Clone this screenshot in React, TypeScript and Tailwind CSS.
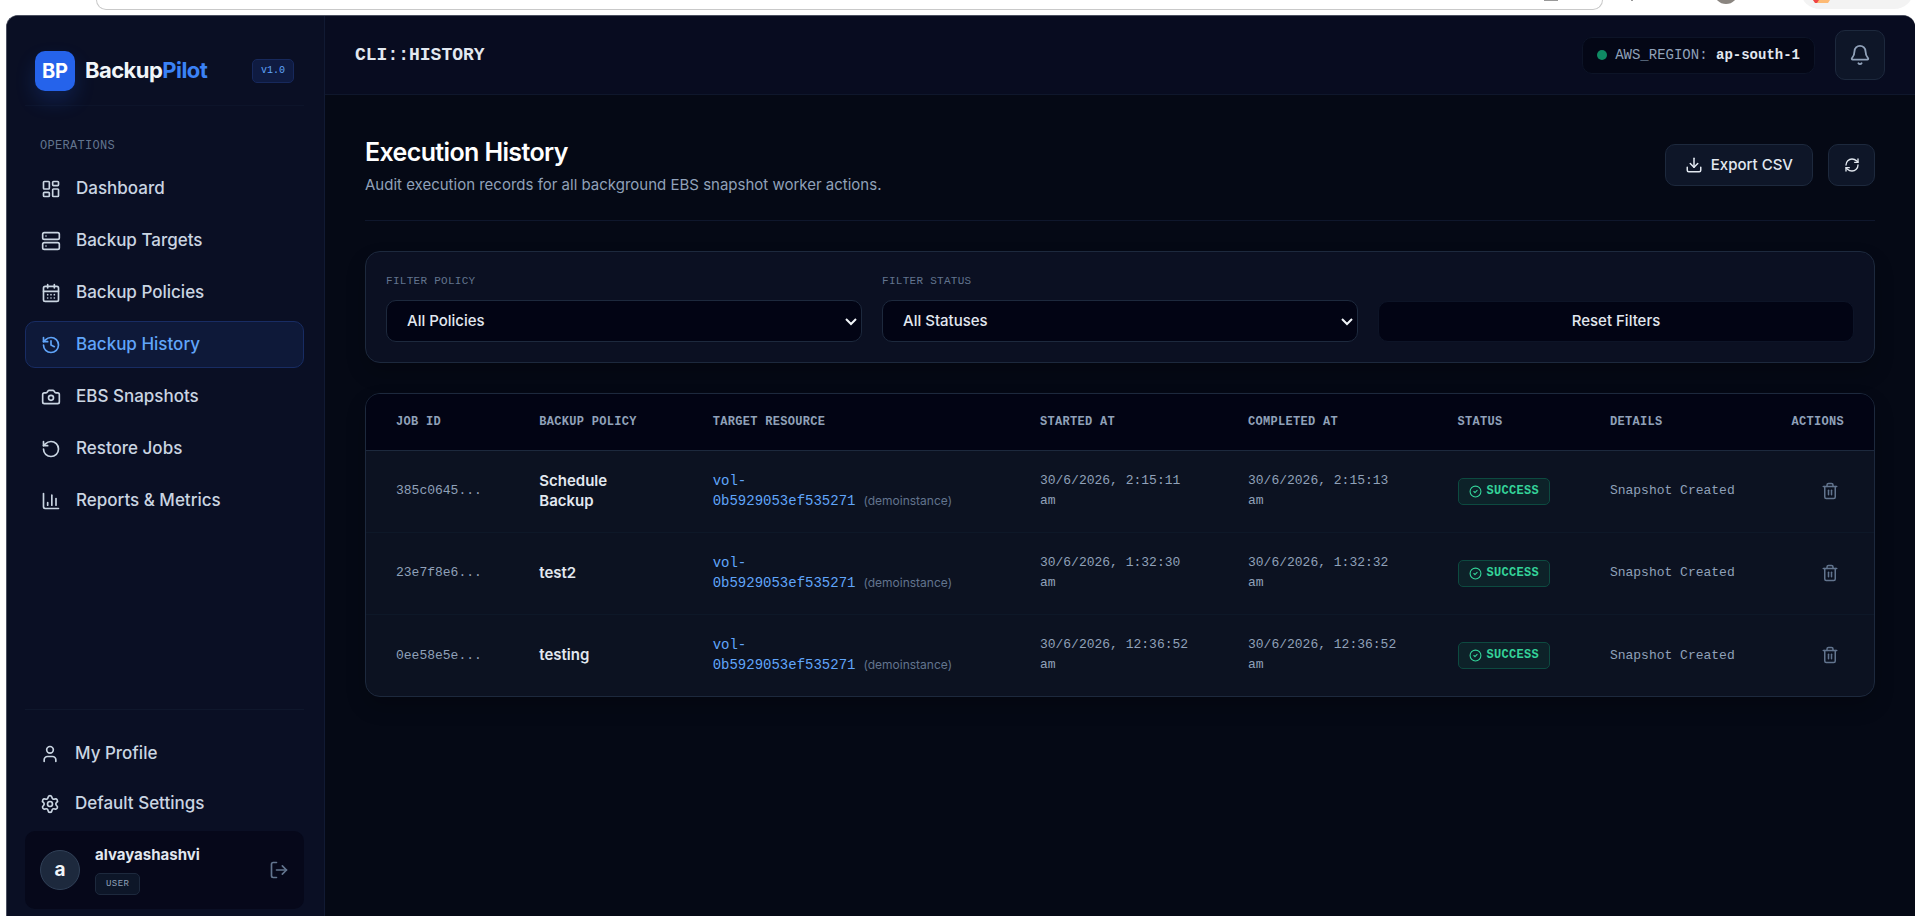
import { useState } from 'react'
import {
  Bell,
  CalendarDays,
  Camera,
  ChartColumn,
  CircleCheck,
  Download,
  History,
  LayoutDashboard,
  LogOut,
  RefreshCw,
  RotateCcw,
  Server,
  Settings,
  Trash2,
  User,
} from 'lucide-react'

const mono = "font-['Liberation_Mono','Courier_New',monospace]"

const navItems = [
  { label: 'Dashboard', icon: LayoutDashboard },
  { label: 'Backup Targets', icon: Server },
  { label: 'Backup Policies', icon: CalendarDays },
  { label: 'Backup History', icon: History, active: true },
  { label: 'EBS Snapshots', icon: Camera },
  { label: 'Restore Jobs', icon: RotateCcw },
  { label: 'Reports & Metrics', icon: ChartColumn },
]

const accountItems = [
  { label: 'My Profile', icon: User },
  { label: 'Default Settings', icon: Settings },
]

const jobs = [
  {
    id: '385c0645...',
    policy: 'Schedule Backup',
    volume: 'vol-0b5929053ef535271',
    instance: 'demoinstance',
    startedAt: '30/6/2026, 2:15:11 am',
    completedAt: '30/6/2026, 2:15:13 am',
    status: 'SUCCESS',
    details: 'Snapshot Created',
  },
  {
    id: '23e7f8e6...',
    policy: 'test2',
    volume: 'vol-0b5929053ef535271',
    instance: 'demoinstance',
    startedAt: '30/6/2026, 1:32:30 am',
    completedAt: '30/6/2026, 1:32:32 am',
    status: 'SUCCESS',
    details: 'Snapshot Created',
  },
  {
    id: '0ee58e5e...',
    policy: 'testing',
    volume: 'vol-0b5929053ef535271',
    instance: 'demoinstance',
    startedAt: '30/6/2026, 12:36:52 am',
    completedAt: '30/6/2026, 12:36:52 am',
    status: 'SUCCESS',
    details: 'Snapshot Created',
  },
]

const columns = [
  { label: 'Job ID', width: 'w-[9.5%]' },
  { label: 'Backup Policy', width: 'w-[11.5%]' },
  { label: 'Target Resource', width: 'w-[21.7%]' },
  { label: 'Started At', width: 'w-[13.8%]' },
  { label: 'Completed At', width: 'w-[13.9%]' },
  { label: 'Status', width: 'w-[10.1%]' },
  { label: 'Details', width: 'w-[12%]' },
  { label: 'Actions', width: 'w-[7.5%]' },
]

// Bottom edge of the browser toolbar above the page
function BrowserStrip() {
  return (
    <div className="flex h-[15px] shrink-0 items-start overflow-hidden bg-white pl-[96px]">
      <div className="flex h-[10px] flex-1 items-start justify-end rounded-b-[20px] border border-t-0 border-[#c9c9c9] pr-[44px]">
        <div className="h-px w-[14px] bg-[#999]" />
      </div>
      <svg width="312" height="10" viewBox="0 0 312 10">
        <rect x="28" y="0" width="2" height="1" fill="#999" />
        <circle cx="123" cy="-8" r="12" fill="#8a8580" />
        <rect x="197" y="-31" width="114" height="40" rx="20" fill="#f3f3f3" />
        <path d="M210 0h17l-2 3h-12z" fill="#fdba74" />
        <path d="M210 0h6l-2 3h-2z" fill="#ef4444" />
      </svg>
    </div>
  )
}

function Sidebar() {
  return (
    <aside className="flex w-[318px] shrink-0 flex-col border-r border-[#111a33] bg-[#0a0f24] pr-5 pb-[7px] pl-[18px]">
      <div className="flex h-[90px] shrink-0 items-center gap-[10px] border-b border-[#0d142a] px-[10px] pt-5">
        <div className="flex size-10 items-center justify-center rounded-[10px] bg-[#2563eb] text-[20px] font-bold text-white shadow-[0_10px_20px_rgba(37,99,235,0.2)]">
          BP
        </div>
        <div className="flex-1 text-[22px] font-bold tracking-tight text-slate-100">
          Backup<span className="text-[#3b82f6]">Pilot</span>
        </div>
        <span className={`${mono} rounded-[5px] border border-[#17295c] bg-[#0f1b41] px-2 py-1 text-[10px] leading-[14px] text-[#60a5fa]`}>
          v1.0
        </span>
      </div>

      <nav className="flex flex-1 flex-col gap-[5px] pt-[31px]">
        <div className={`${mono} mb-[5px] px-[15px] text-[12px] leading-[18px] tracking-wide text-slate-500 uppercase`}>Operations</div>
        {navItems.map(({ label, icon: Icon, active }) => (
          <a
            key={label}
            href="#"
            className={`flex h-[47px] items-center gap-[15px] rounded-[10px] border px-[15px] text-[17px] font-medium ${
              active ? 'border-[#182c63] bg-[#0e1939] text-[#60a5fa]' : 'border-transparent text-slate-300'
            }`}
          >
            <Icon size={20} strokeWidth={2} />
            {label}
          </a>
        ))}
      </nav>

      <div className="flex flex-col gap-[5px] border-t border-[#0f172c] pt-[21px]">
        {accountItems.map(({ label, icon: Icon }) => (
          <a key={label} href="#" className="flex h-[45px] items-center gap-[15px] px-[15px] text-[17px] font-medium text-slate-300">
            <Icon size={20} strokeWidth={2} />
            {label}
          </a>
        ))}
        <div className="flex h-[78px] items-center rounded-[10px] bg-[#06081a] px-[15px]">
          <div className="flex size-10 items-center justify-center rounded-full border border-slate-700 bg-slate-800 text-[19px] font-bold text-slate-100">
            a
          </div>
          <div className="ml-[15px] flex-1">
            <div className="text-[15px] leading-5 font-bold text-slate-200">alvayashashvi</div>
            <span className={`${mono} mt-2 inline-block rounded-[5px] border border-slate-800 bg-[#0d1628] px-[10px] text-[9px] leading-5 tracking-wider text-slate-400`}>
              USER
            </span>
          </div>
          <button type="button" aria-label="Log out" className="text-slate-500">
            <LogOut size={20} strokeWidth={2} />
          </button>
        </div>
      </div>
    </aside>
  )
}

function TopBar() {
  return (
    <header className="flex h-[79px] shrink-0 items-center justify-between border-b border-[#0f172c] bg-[#080c20] px-[30px]">
      <div className={`${mono} text-[18px] font-bold text-slate-200`}>CLI::HISTORY</div>
      <div className="flex items-center gap-5">
        <div className={`${mono} flex h-[37px] items-center rounded-[10px] border border-[#0d1427] bg-[#040716] px-[14px] text-[14px] text-slate-400`}>
          <span className="mr-2 size-[10px] rounded-full bg-[#0f8a63]" />
          AWS_REGION:&nbsp;<span className="font-bold text-slate-200">ap-south-1</span>
        </div>
        <button
          type="button"
          aria-label="Notifications"
          className="flex size-[50px] items-center justify-center rounded-[10px] border border-slate-800 bg-[#0e1628] text-slate-400"
        >
          <Bell size={22} strokeWidth={2} />
        </button>
      </div>
    </header>
  )
}

interface FilterSelectProps {
  id: string
  label: string
  options: string[]
}

function FilterSelect({ id, label, options }: FilterSelectProps) {
  const [value, setValue] = useState(options[0])

  return (
    <div>
      <label htmlFor={id} className={`${mono} mb-[10px] block text-[11px] leading-[18px] tracking-wide text-slate-500 uppercase`}>
        {label}
      </label>
      <div className="relative">
        <select
          id={id}
          value={value}
          onChange={e => setValue(e.target.value)}
          className="h-[42px] w-full appearance-none rounded-[10px] border border-slate-800 bg-[#020414] px-5 text-[15px] font-medium text-slate-200"
        >
          {options.map(option => (
            <option key={option}>{option}</option>
          ))}
        </select>
        <svg
          className="pointer-events-none absolute top-[18px] right-[5px] text-slate-100"
          width="12"
          height="8"
          viewBox="0 0 12 8"
          fill="none"
          stroke="currentColor"
          strokeWidth="2"
        >
          <path d="M1 1l5 5 5-5" />
        </svg>
      </div>
    </div>
  )
}

function HistoryTable() {
  return (
    <div className="mt-[30px] overflow-hidden rounded-[15px] border border-slate-800 bg-[#0c1221] shadow-[0_10px_20px_rgba(0,0,0,0.2)]">
      <table className="w-full table-fixed border-collapse text-left">
        <thead>
          <tr className="h-[56px] border-b border-slate-800 bg-[#020414]">
            {columns.map(({ label, width }) => (
              <th
                key={label}
                className={`${mono} ${width} px-[30px] text-[12px] font-bold tracking-wide text-slate-400 uppercase last:pl-0 last:text-right`}
              >
                {label}
              </th>
            ))}
          </tr>
        </thead>
        <tbody>
          {jobs.map(job => (
            <tr key={job.id} className="h-[82px] border-b border-[#0e1828] last:border-b-0">
              <td className={`${mono} pl-[30px] text-[13px] text-slate-400`}>{job.id}</td>
              <td className="px-[30px] text-[15px] leading-5 font-semibold text-slate-200">{job.policy}</td>
              <td className={`${mono} px-[30px] text-[14px] leading-5 text-[#60a5fa]`}>
                {job.volume}<span className="ml-2 font-['Inter','Liberation_Sans',sans-serif] text-[12px] leading-none text-slate-500">({job.instance})</span>
              </td>
              <td className={`${mono} pr-5 pl-[30px] text-[13px] leading-5 text-slate-400`}>{job.startedAt}</td>
              <td className={`${mono} pr-5 pl-[30px] text-[13px] leading-5 text-slate-400`}>{job.completedAt}</td>
              <td className="pl-[30px]">
                <span className={`${mono} inline-flex h-[27px] items-center gap-[5px] rounded-[5px] border border-[#0d4a40] bg-[#0d2229] px-[10px] align-middle text-[12px] font-bold tracking-wide text-[#34d399]`}>
                  <CircleCheck size={13} strokeWidth={2} />
                  {job.status}
                </span>
              </td>
              <td className={`${mono} pl-[30px] text-[13px] whitespace-nowrap text-slate-400`}>{job.details}</td>
              <td className="pr-[30px] text-right">
                <button type="button" aria-label={`Delete ${job.id}`} className="p-[5px] align-middle text-slate-500">
                  <Trash2 size={18} strokeWidth={2} />
                </button>
              </td>
            </tr>
          ))}
        </tbody>
      </table>
    </div>
  )
}

export default function App() {
  return (
    <div className="flex h-screen flex-col overflow-hidden bg-white pr-[3px] font-['Inter','Liberation_Sans',sans-serif]">
      <BrowserStrip />
      <div className="ml-[6px] flex min-h-0 flex-1 overflow-hidden rounded-t-[12px] border-t border-l border-[#4b5060] bg-[#050915]">
        <Sidebar />
        <div className="flex min-w-0 flex-1 flex-col">
          <TopBar />
          <main className="flex-1 px-10 pt-10">
            <div className="flex items-start justify-between border-b border-[#0f172c] pb-6">
              <div>
                <h1 className="text-[25px] leading-[34px] font-semibold tracking-tight text-white">Execution History</h1>
                <p className="mt-[5px] text-[15px] leading-[22px] text-slate-400">
                  Audit execution records for all background EBS snapshot worker actions.
                </p>
              </div>
              <div className="mt-[9px] flex gap-[15px]">
                <button
                  type="button"
                  className="flex h-[42px] items-center gap-2 rounded-[10px] border border-slate-800 bg-[#0e1628] px-[19px] text-[15px] font-medium text-slate-200"
                >
                  <Download size={18} strokeWidth={2} />
                  Export CSV
                </button>
                <button
                  type="button"
                  aria-label="Refresh"
                  className="flex h-[42px] w-[47px] items-center justify-center rounded-[10px] border border-slate-800 bg-[#0e1628] text-slate-200"
                >
                  <RefreshCw size={16} strokeWidth={2} />
                </button>
              </div>
            </div>

            <div className="mt-[30px] grid grid-cols-3 items-end gap-5 rounded-[15px] border border-slate-800 bg-[#0b1022] p-5 shadow-[0_10px_20px_rgba(0,0,0,0.2)]">
              <FilterSelect id="filter-policy" label="Filter Policy" options={['All Policies', 'Schedule Backup', 'test2', 'testing']} />
              <FilterSelect id="filter-status" label="Filter Status" options={['All Statuses', 'Success', 'Failed']} />
              <button type="button" className="h-[41px] rounded-[10px] border border-[#0d1427] bg-[#020414] text-[15px] font-medium text-slate-200">
                Reset Filters
              </button>
            </div>

            <HistoryTable />
          </main>
        </div>
      </div>
    </div>
  )
}
